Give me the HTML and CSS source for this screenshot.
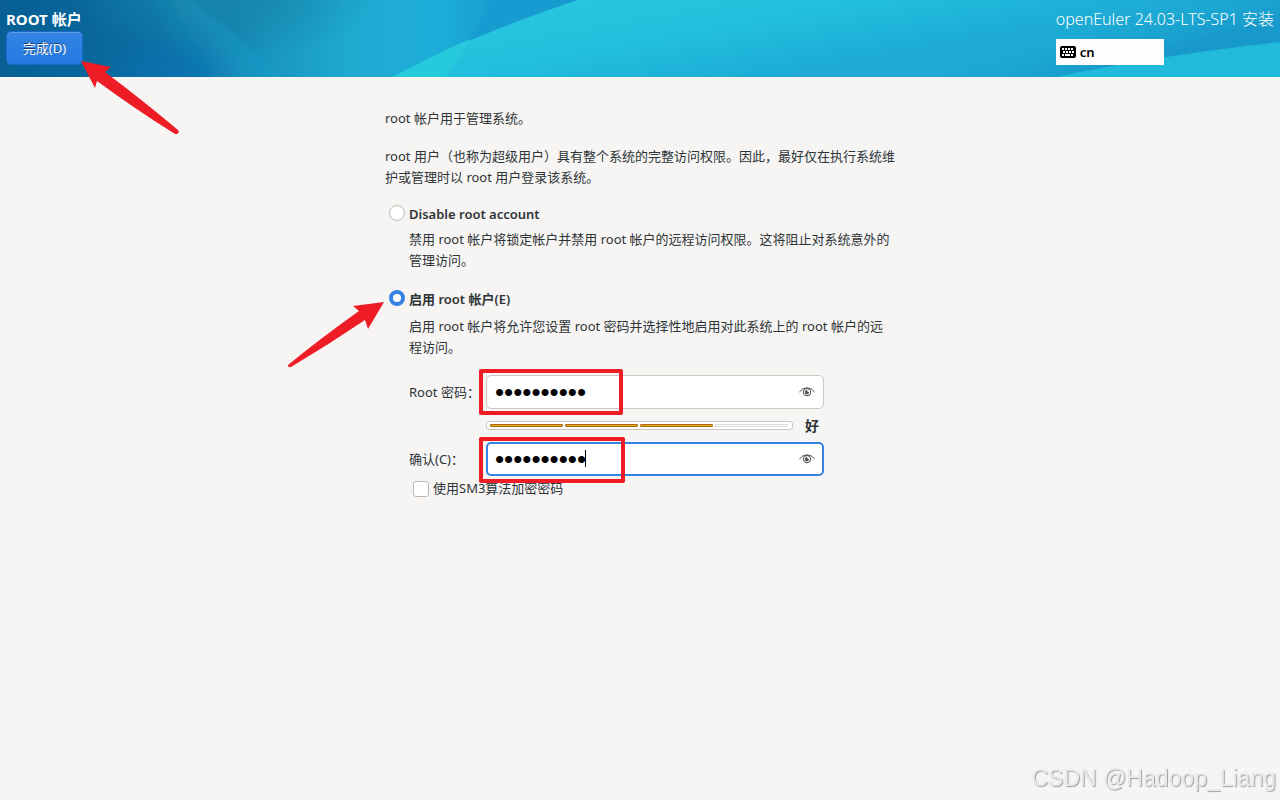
FILE: index.html
```html
<!DOCTYPE html>
<html lang="zh-CN">
   <head>
      <meta charset="UTF-8">
      <meta name="viewport" content="width=device-width, initial-scale=1.0"/>
      <title>ROOT 帐户</title>
      <link rel="stylesheet" href="styles.css">
   </head>
   <body>
      <header class="topbar">
         <svg class="topbar-art" viewBox="0 0 1280 77" preserveAspectRatio="none" aria-hidden="true">
            <defs>
               <linearGradient id="base" x1="0" y1="0" x2="1" y2="0">
                  <stop offset="0" stop-color="#075f93"/>
                  <stop offset="0.12" stop-color="#0a6ca2"/>
                  <stop offset="0.16" stop-color="#0e79ab"/>
                  <stop offset="0.21" stop-color="#1995c0"/>
                  <stop offset="0.27" stop-color="#1ea9d0"/>
                  <stop offset="0.35" stop-color="#1eaedb"/>
                  <stop offset="0.37" stop-color="#1798cf"/>
                  <stop offset="1" stop-color="#1798cf"/>
               </linearGradient>
               <linearGradient id="beam" gradientUnits="userSpaceOnUse" x1="180" y1="60" x2="245" y2="20">
                  <stop offset="0" stop-color="#1a9cc8" stop-opacity="0"/>
                  <stop offset="1" stop-color="#1a9cc8" stop-opacity="0.6"/>
               </linearGradient>
               <linearGradient id="wave" gradientUnits="userSpaceOnUse" x1="700" y1="-30" x2="722" y2="90">
                  <stop offset="0" stop-color="#28c8de"/>
                  <stop offset="0.5" stop-color="#23bfde"/>
                  <stop offset="1" stop-color="#1ca9d4"/>
               </linearGradient>
               <linearGradient id="right" gradientUnits="userSpaceOnUse" x1="1060" y1="-10" x2="1085" y2="77">
                  <stop offset="0" stop-color="#22bbdd" stop-opacity="0"/>
                  <stop offset="1" stop-color="#1899cb"/>
               </linearGradient>
               <radialGradient id="blue">
                  <stop offset="0" stop-color="#0b72b3"/>
                  <stop offset="1" stop-color="#0b72b3" stop-opacity="0"/>
               </radialGradient>
               <radialGradient id="teal">
                  <stop offset="0" stop-color="#1786ac"/>
                  <stop offset="1" stop-color="#1786ac" stop-opacity="0"/>
               </radialGradient>
               <filter id="soft" x="-20%" y="-20%" width="140%" height="140%">
                  <feGaussianBlur stdDeviation="2"/>
               </filter>
            </defs>
            <rect width="1280" height="77" fill="url(#base)"/>
            <ellipse cx="175" cy="85" rx="70" ry="60" fill="url(#blue)"/>
            <ellipse cx="225" cy="-5" rx="150" ry="65" fill="url(#teal)"/>
            <path d="M120 -10 L180 -10 L300 90 L170 90 Z" fill="url(#beam)" filter="url(#soft)"/>
            <path d="M450 0 L491 0 L472 38 L440 50 Z" fill="#1eacd8" opacity="0.6" filter="url(#soft)"/>
            <path d="M491 0 L578 0 Q530 17 473 38 Z" fill="#189bd0"/>
            <path d="M392 77 Q470 36 578 0 L1280 0 L1280 77 Z" fill="url(#wave)"/>
            <path d="M392 77 Q440 52 470 39 L446 77 Z" fill="#27cadb"/>
            <path d="M880 77 Q1100 0 1280 -20 L1280 77 Z" fill="url(#right)"/>
            <path d="M1055 77 Q1160 55 1280 42 L1280 77 Z" fill="#22badb"/>
         </svg>
         <div class="topbar-left">
            <h1 class="page-title">ROOT 帐户</h1>
            <button type="button" class="done-button">完成(D)</button>
         </div>
         <div class="topbar-right">
            <span class="product">openEuler 24.03-LTS-SP1 安装</span>
            <button type="button" class="keyboard-layout">
               <svg width="16" height="12" viewBox="0 0 16 12" aria-hidden="true">
                  <rect width="16" height="12" rx="2" fill="#000"/>
                  <path d="M2 3h2m1 0h2m1 0h2m1 0h2M3 6h2m1 0h2m1 0h2m1 0h2M2 9h2m1 0h5m1 0h2" stroke="#fff" stroke-width="2"/>
               </svg>
               cn
            </button>
         </div>
         <svg class="arrow arrow-done" width="102" height="76" viewBox="0 0 102 76" aria-hidden="true">
            <path d="M2 2 L32 8 L26 13 Q62 40 99 71 Q101 73 98 75 L96 75 Q56 50 18 22 L16 29 Z" fill="#ee1c25"/>
         </svg>
      </header>

      <main class="content">
         <p>root 帐户用于管理系统。</p>
         <p>root 用户（也称为超级用户）具有整个系统的完整访问权限。因此，最好仅在执行系统维护或管理时以 root 用户登录该系统。</p>

         <div class="option">
            <input type="radio" name="root" id="root-disable">
            <label for="root-disable">Disable root account</label>
         </div>
         <p class="option-text">禁用 root 帐户将锁定帐户并禁用 root 帐户的远程访问权限。这将阻止对系统意外的管理访问。</p>

         <div class="option option-enable">
            <input type="radio" name="root" id="root-enable" checked>
            <label for="root-enable">启用 root 帐户(E)</label>
            <svg class="arrow arrow-enable" width="100" height="70" viewBox="0 0 100 70" aria-hidden="true">
               <path d="M97 3 L81 30 L78 21 Q41 46 4 68 Q1 69 1 66 Q34 39 72 12 L66 7 Z" fill="#ee1c25"/>
            </svg>
         </div>
         <p class="option-text">启用 root 帐户将允许您设置 root 密码并选择性地启用对此系统上的 root 帐户的远程访问。</p>

         <form class="password-form">
            <label for="password">Root 密码：</label>
            <div class="field">
               <input type="password" id="password" value="openeuler1">
               <button type="button" class="reveal" aria-label="显示密码">
                  <svg width="16" height="10" viewBox="0 0 16 10" fill="none" stroke="#4b5052" aria-hidden="true">
                     <path d="M0.4 5 Q3.5 0.8 8 0.8 T15.6 5"/>
                     <circle cx="8" cy="5.2" r="3.7"/>
                     <path d="M8 3.6 A1.7 1.7 0 1 0 9.6 5.4 L8 5.2 Z" fill="#4b5052"/>
                  </svg>
               </button>
               <span class="mark"></span>
            </div>

            <div class="strength">
               <div class="strength-bar" role="meter" aria-label="密码强度" aria-valuemin="0" aria-valuemax="4" aria-valuenow="3">
                  <span class="block filled"></span>
                  <span class="block filled"></span>
                  <span class="block filled"></span>
                  <span class="block"></span>
               </div>
               <strong class="strength-label">好</strong>
            </div>

            <label for="confirm">确认(C)：</label>
            <div class="field active">
               <input type="password" id="confirm" value="openeuler1">
               <span class="caret"></span>
               <button type="button" class="reveal" aria-label="显示密码">
                  <svg width="16" height="10" viewBox="0 0 16 10" fill="none" stroke="#4b5052" aria-hidden="true">
                     <path d="M0.4 5 Q3.5 0.8 8 0.8 T15.6 5"/>
                     <circle cx="8" cy="5.2" r="3.7"/>
                     <path d="M8 3.6 A1.7 1.7 0 1 0 9.6 5.4 L8 5.2 Z" fill="#4b5052"/>
                  </svg>
               </button>
               <span class="mark mark-confirm"></span>
            </div>

            <div class="sm3">
               <input type="checkbox" id="sm3">
               <label for="sm3">使用SM3算法加密密码</label>
            </div>
         </form>
      </main>

      <div class="watermark">CSDN @Hadoop_Liang</div>
   </body>
</html>
```
FILE: styles.css
```css
*
{
   box-sizing: border-box;
}

body
{
   margin: 0;
   min-height: 100vh;
   background: #f6f5f4;
   color: #2e3436;
   font-family: "Noto Sans", "Noto Sans CJK SC", sans-serif;
   font-size: 13px;
   line-height: 21px;
}

button
{
   font: inherit;
   cursor: pointer;
}

/* Top bar */
.topbar
{
   position: relative;
   display: flex;
   justify-content: space-between;
   height: 77px;
   padding: 7px 6px 0;
   background: #1798cf;
}

.topbar-art
{
   position: absolute;
   top: 0;
   left: 0;
   width: 100%;
   height: 100%;
}

.topbar-left,
.topbar-right
{
   position: relative;
   display: flex;
   flex-direction: column;
   align-items: flex-start;
   color: #ffffff;
}

.page-title
{
   margin: 0;
   font-size: 15px;
   font-weight: 700;
   line-height: 24px;
}

.done-button
{
   width: 77px;
   height: 34px;
   padding: 0;
   border: 1px solid #1b6acb;
   border-radius: 5px;
   background: linear-gradient(#3584e4, #2379e2);
   box-shadow: inset 0 1px rgba(255, 255, 255, 0.2);
   color: #ffffff;
   text-shadow: 0 -1px rgba(0, 0, 0, 0.5);
}

.product
{
   font-size: 16px;
   font-weight: 300;
   line-height: 24px;
}

.keyboard-layout
{
   display: flex;
   align-items: center;
   gap: 4px;
   width: 108px;
   height: 26px;
   margin-top: 8px;
   padding: 0 4px;
   border: 0;
   background: #fdfdfd;
   color: #000000;
   font-weight: 600;
}

/* Content */
.content
{
   max-width: 510px;
   margin: 0 auto;
   padding-top: 31px;
}

.content p
{
   margin: 0 0 17px;
}

.option
{
   position: relative;
   display: flex;
   align-items: flex-start;
   gap: 4px;
   height: 24px;
   padding-left: 4px;
   font-weight: 600;
   line-height: 18px;
}

.content .option-text
{
   margin: 0 0 17px;
   padding: 0 2px 0 24px;
}

.option-enable
{
   height: 28px;
   padding-top: 2px;
}

input[type="radio"],
input[type="checkbox"]
{
   appearance: none;
   width: 16px;
   height: 16px;
   margin: 0;
   border: 1px solid #bfb8b1;
   background: #ffffff;
}

input[type="radio"]
{
   border-radius: 50%;
}

input[type="radio"]:checked
{
   border: 4px solid #3584e4;
}

input[type="checkbox"]
{
   border-radius: 3px;
}

.password-form
{
   display: grid;
   grid-template-columns: 77px 338px;
   align-items: center;
   padding-left: 24px;
}

.field
{
   position: relative;
   display: flex;
   align-items: center;
   height: 34px;
   padding: 0 8px;
   border: 1px solid #cdc7c2;
   border-radius: 5px;
   background: #ffffff;
}

.field.active
{
   padding: 0 7px;
   border: 2px solid #3584e4;
}

.field input
{
   flex: 1;
   min-width: 0;
   height: 30px;
   padding: 0;
   border: 0;
   outline: 0;
   background: transparent;
   color: #000000;
   font-family: "Liberation Sans", sans-serif;
   font-size: 26px;
}

.reveal
{
   display: flex;
   padding: 0;
   border: 0;
   background: transparent;
}

.caret
{
   position: absolute;
   top: 6px;
   left: 97px;
   width: 1px;
   height: 17px;
   background: #000000;
}

.strength
{
   grid-column: 2;
   display: flex;
   align-items: center;
   gap: 12px;
   height: 33px;
}

.strength-bar
{
   display: flex;
   gap: 2px;
   width: 307px;
   height: 9px;
   padding: 2px 3px;
   border: 1px solid #cdc7c2;
   border-radius: 3px;
   background: #ffffff;
}

.block
{
   flex: 0 0 73px;
   border: 1px solid #dedad7;
   border-radius: 1px;
}

.block.filled
{
   border-color: #a06c10;
   background: #f5a31a;
}

.strength-label
{
   font-size: 14px;
}

.sm3
{
   grid-column: 1 / -1;
   display: flex;
   align-items: center;
   gap: 4px;
   height: 25px;
   padding-left: 4px;
}

/* Red notes over the form */
.arrow
{
   position: absolute;
   z-index: 2;
   pointer-events: none;
}

.arrow-done
{
   top: 59px;
   left: 79px;
}

.arrow-enable
{
   top: 11px;
   left: -98px;
}

.mark
{
   position: absolute;
   z-index: 2;
   top: -7px;
   left: -8px;
   width: 144px;
   height: 46px;
   border: 4px solid #ee1c25;
   border-radius: 2px;
   pointer-events: none;
}

.mark-confirm
{
   left: -9px;
   width: 146px;
}

.watermark
{
   position: fixed;
   right: 4px;
   bottom: 8px;
   color: #e9e9e9;
   font-family: "Liberation Sans", sans-serif;
   font-size: 23px;
   line-height: 28px;
   text-shadow: 1px 1px 1px #a0a0a0;
}
```
